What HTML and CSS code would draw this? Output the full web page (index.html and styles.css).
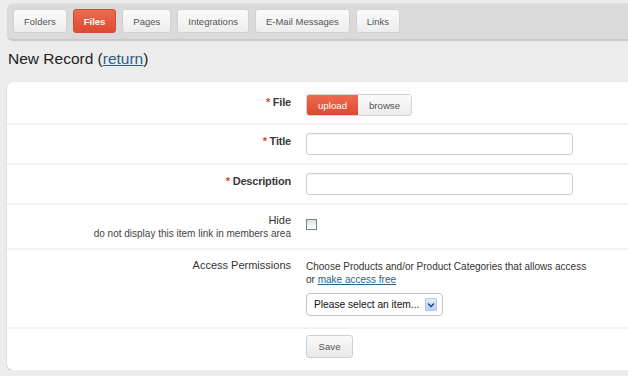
FILE: index.html
```html
<!DOCTYPE html>
<html>
<head>
<meta charset="utf-8">
<link rel="stylesheet" href="styles.css">
</head>
<body>
<nav class="tabbar">
  <a class="tab">Folders</a>
  <a class="tab active">Files</a>
  <a class="tab">Pages</a>
  <a class="tab">Integrations</a>
  <a class="tab">E-Mail Messages</a>
  <a class="tab">Links</a>
</nav>
<h1 class="title">New Record (<a class="link">return</a>)</h1>
<form class="panel">
  <div class="row first">
    <div class="label req"><span class="star">*</span> File</div>
    <div class="field">
      <div class="btngroup"><span class="seg on">upload</span><span class="seg">browse</span></div>
    </div>
  </div>
  <div class="row">
    <div class="label req"><span class="star">*</span> Title</div>
    <div class="field"><div class="input"></div></div>
  </div>
  <div class="row">
    <div class="label req"><span class="star">*</span> Description</div>
    <div class="field"><div class="input"></div></div>
  </div>
  <div class="row">
    <div class="label">Hide<div class="sub">do not display this item link in members area</div></div>
    <div class="field"><span class="check"></span></div>
  </div>
  <div class="row access">
    <div class="label">Access Permissions</div>
    <div class="field">
      <div class="help">Choose Products and/or Product Categories that allows access<br>or <a class="link">make access free</a></div>
      <div class="select"><span>Please select an item...</span>
        <span class="arrow"><svg width="8" height="6" viewBox="0 0 8 6"><path d="M1 1.5 L4 4.5 L7 1.5" fill="none" stroke="#2a4f8c" stroke-width="1.6"/></svg></span>
      </div>
    </div>
  </div>
  <div class="row last">
    <div class="label"></div>
    <div class="field"><span class="save">Save</span></div>
  </div>
</form>
</body>
</html>
```
FILE: styles.css
```css
html, body {
  margin: 0;
  padding: 0;
  background: #ececec;
  font-family: "Liberation Sans", Arial, sans-serif;
  font-size: 10px;
  color: #333;
  overflow: hidden;
}
.tabbar {
  display: flex;
  gap: 6px;
  margin: 3px -10px 0 7px;
  padding: 5px 6px 4px;
  height: 26px;
  background: #dadada;
  border-top: 1px solid #e4e4e4;
  border-bottom: 2px solid #c9c9c9;
  border-radius: 6px 0 0 6px;
}
.tab {
  box-sizing: border-box;
  height: 24px;
  padding: 0 10px;
  display: flex;
  align-items: center;
  font-size: 9.5px;
  color: #555;
  background: linear-gradient(#fbfbfb, #ededed);
  border: 1px solid #d2d2d2;
  border-radius: 3px;
}
.tab.active {
  color: #fff;
  font-weight: bold;
  background: linear-gradient(#ee6a4f, #dd4a30);
  border-color: #d54a32;
}
.title {
  margin: 9px 0 0 8px;
  font-size: 15.5px;
  font-weight: normal;
  color: #222;
  line-height: 18px;
  height: 18px;
}
.link {
  color: #2c5f82;
  text-decoration: underline;
}
.panel {
  margin: 14px -10px 0 7px;
  background: #fff;
  border-radius: 6px;
  box-shadow: 0 1px 0 #c6c6c6, 0 2px 1px #d8d8d8, -1px 0 0 #e2e2e2;
}
.row {
  display: grid;
  grid-template-columns: 284px 1fr;
  column-gap: 15px;
  padding: 8px 0;
  border-bottom: 2px solid #f2f2f2;
}
.row.first { padding-top: 12px; padding-bottom: 7px; }
.row.access { padding-bottom: 11px; }
.row.last { border-bottom: none; padding: 6px 0 12px; }
.label {
  text-align: right;
  font-size: 11px;
  line-height: 13px;
  padding-top: 1px;
  color: #333;
}
.label.req {
  font-weight: bold;
  letter-spacing: -0.2px;
  padding-top: 2px;
  color: #3a3a3a;
}
.star { color: #d9452c; }
.sub { font-size: 10px; color: #444; }
.btngroup {
  display: inline-flex;
  height: 22px;
  border-radius: 3px;
  overflow: hidden;
  border: 1px solid #d4d4d4;
  box-sizing: border-box;
}
.seg {
  display: flex;
  align-items: center;
  justify-content: center;
  width: 53px;
  font-size: 9.7px;
  color: #555;
  background: linear-gradient(#fafafa, #ececec);
}
.seg.on {
  width: 51px;
  color: #fff;
  background: linear-gradient(#ef6a4f, #dc4a30);
}
.input {
  box-sizing: border-box;
  width: 267px;
  height: 22px;
  border: 1px solid #cfcfcf;
  border-radius: 3px;
  background: #fff;
  box-shadow: inset 0 1px 1px rgba(0,0,0,0.05);
}
.check {
  display: block;
  box-sizing: border-box;
  width: 11px;
  height: 11px;
  margin-top: 6px;
  border: 1px solid #6f8498;
  background: linear-gradient(#e2e2e2, #fdfdfd);
}
.help {
  line-height: 13px;
  padding-top: 2px;
  color: #333;
}
.select {
  box-sizing: border-box;
  margin-top: 7px;
  width: 137px;
  height: 23px;
  display: flex;
  align-items: center;
  justify-content: space-between;
  padding: 0 5px 0 7px;
  border: 1px solid #c4c4c4;
  border-radius: 4px;
  font-size: 10.2px;
  color: #111;
}
.arrow {
  box-sizing: border-box;
  width: 12px;
  height: 13px;
  display: flex;
  align-items: center;
  justify-content: center;
  border: 1px solid #b3c8ef;
  border-radius: 1px;
  background: linear-gradient(#e3ecfc, #bcd0f4);
}
.save {
  box-sizing: border-box;
  display: flex;
  align-items: center;
  justify-content: center;
  width: 47px;
  height: 23px;
  border: 1px solid #cfcfcf;
  border-radius: 3px;
  background: linear-gradient(#fafafa, #e9e9e9);
  color: #555;
  font-size: 9.7px;
}
```
